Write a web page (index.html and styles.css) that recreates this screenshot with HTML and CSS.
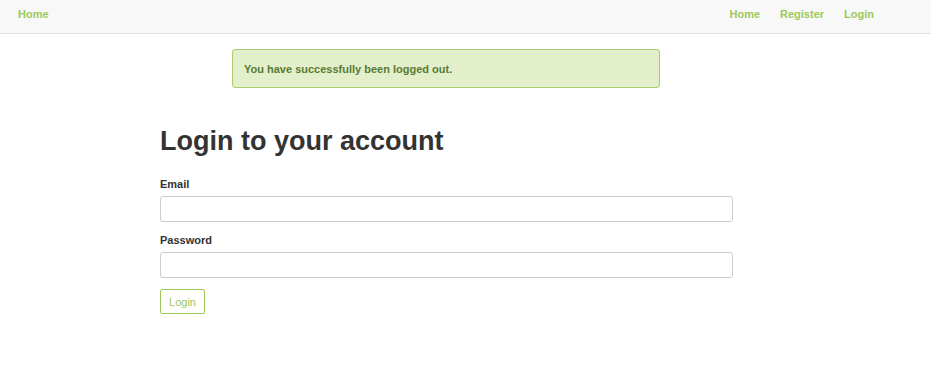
FILE: index.html
```html
<!DOCTYPE html>
<html>
<head>
<meta charset="utf-8">
<link rel="stylesheet" href="styles.css">
</head>
<body>
<nav class="navbar">
  <a class="brand" href="#">Home</a>
  <div class="nav-links">
    <a href="#">Home</a>
    <a href="#">Register</a>
    <a href="#">Login</a>
  </div>
</nav>
<main class="container">
  <div class="alert">You have successfully been logged out.</div>
  <h1 class="title">Login to your account</h1>
  <form class="form">
    <label class="label" for="email">Email</label>
    <input class="input" id="email" type="text">
    <label class="label" for="password">Password</label>
    <input class="input" id="password" type="password">
    <button class="btn" type="button">Login</button>
  </form>
</main>
</body>
</html>
```
FILE: styles.css
```css
* { box-sizing: border-box; }
body {
  margin: 0;
  background: #fff;
  font-family: "Liberation Sans", Arial, Helvetica, sans-serif;
  color: #333;
}
.navbar {
  height: 34px;
  background: #f8f8f8;
  border-bottom: 1px solid #e2e2e2;
  display: flex;
  align-items: flex-start;
  justify-content: space-between;
  padding: 8px 47px 0 18px;
}
.navbar a {
  color: #9cc95a;
  font-size: 11px;
  font-weight: bold;
  text-decoration: none;
  line-height: 13px;
}
.nav-links {
  display: flex;
}
.nav-links a {
  padding: 0 10px;
}
.container {
  margin-left: 160px;
  width: 573px;
  padding-top: 15px;
}
.alert {
  width: 428px;
  height: 39px;
  margin: 0 0 0 72px;
  background: #e3efcb;
  border: 1px solid #a9cd6e;
  border-radius: 3px;
  color: #587a32;
  font-size: 11px;
  font-weight: bold;
  padding: 13px 11px 0;
  line-height: 13px;
}
.title {
  margin: 37px 0 0;
  font-size: 27px;
  font-weight: bold;
  color: #333;
  line-height: 32px;
}
.form {
  display: flex;
  flex-direction: column;
  align-items: flex-start;
  margin-top: 21px;
}
.label {
  font-size: 11px;
  font-weight: bold;
  color: #333;
  line-height: 13px;
  margin-bottom: 5px;
}
.input {
  width: 573px;
  height: 26px;
  border: 1px solid #cccccc;
  border-radius: 3px;
  margin: 0 0 12px;
  padding: 4px 6px;
  font: 12px "Liberation Sans", Arial, sans-serif;
}
.btn {
  margin-top: -1px;
  width: 45px;
  height: 25px;
  background: #fff;
  border: 1px solid #9cc95a;
  border-radius: 2px;
  color: #9cc95a;
  font: 11px "Liberation Sans", Arial, sans-serif;
  padding: 0;
}
```
